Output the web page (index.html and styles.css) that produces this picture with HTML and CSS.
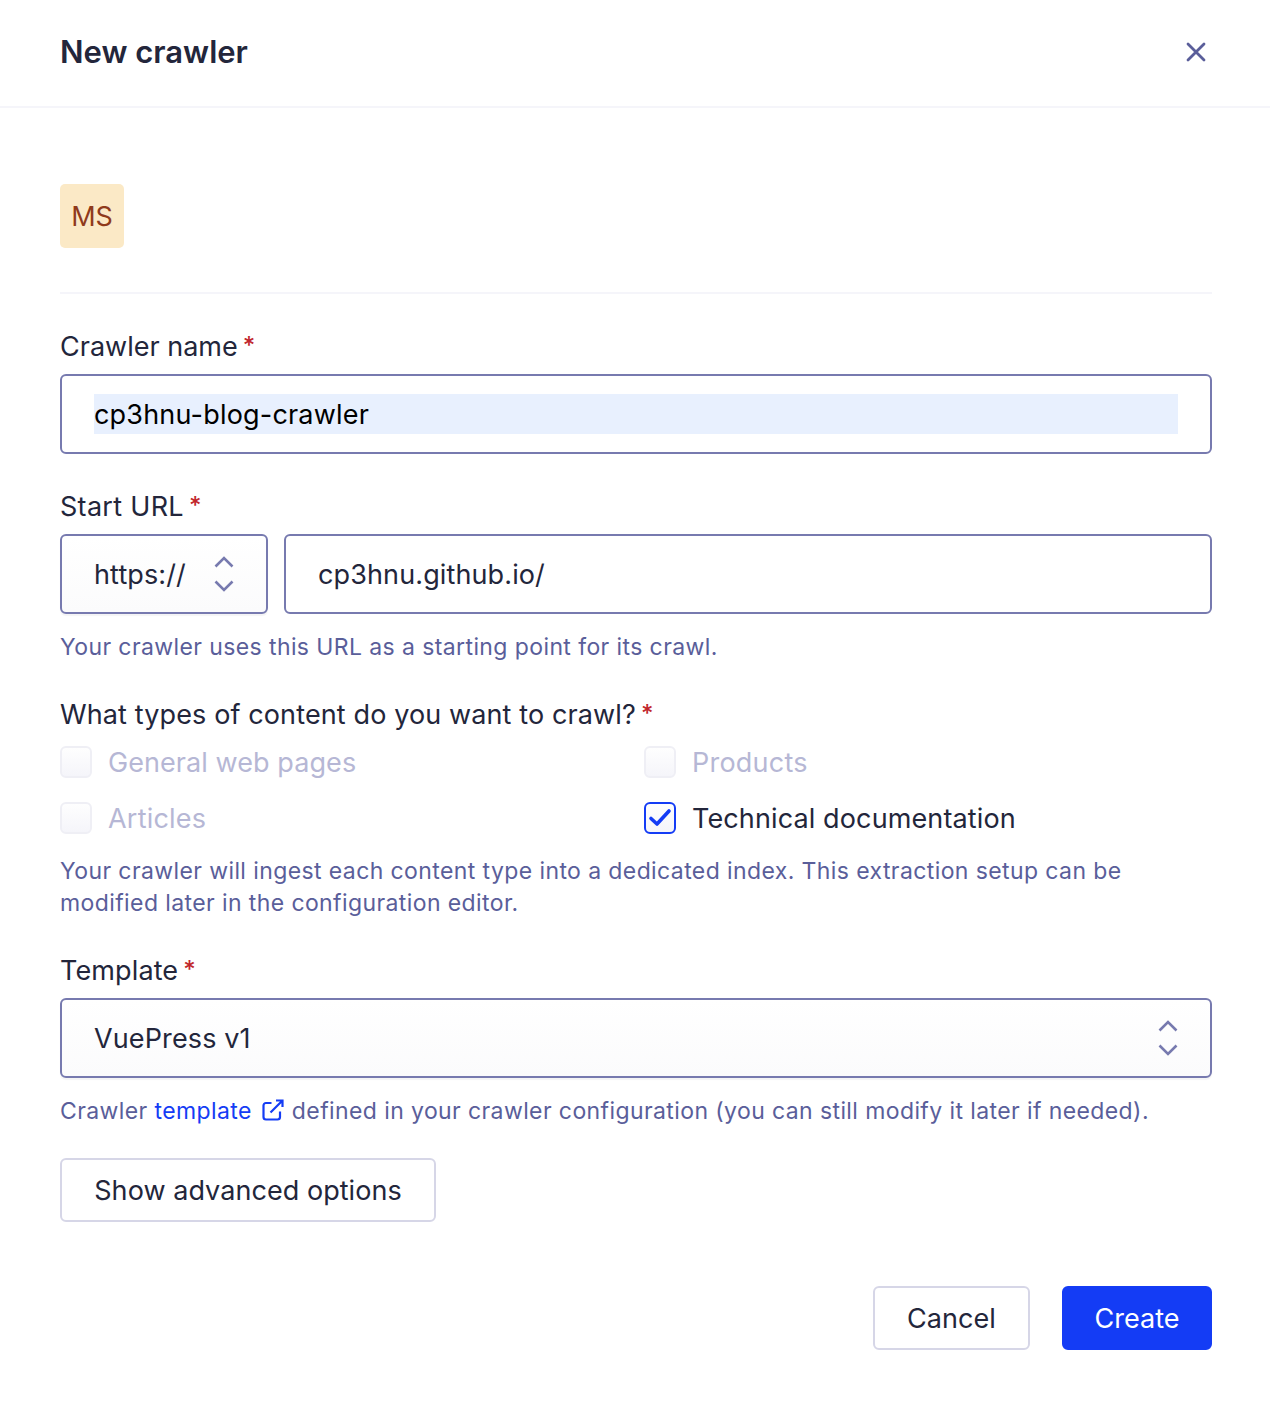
FILE: index.html
```html
<!DOCTYPE html>
<html lang="en">
<head>
<meta charset="utf-8">
<title>New crawler</title>
<link rel="stylesheet" href="styles.css">
</head>
<body>
<header class="header">
  <h1 class="title">New crawler</h1>
  <svg class="close" viewBox="0 0 24 24"><path d="M4 4l16 16M20 4l-16 16"/></svg>
</header>
<main class="body">
  <div class="identity"><div class="avatar">MS</div></div>
  <section class="field name-field">
    <div class="label l-name">Crawler name<span class="req">*</span></div>
    <div class="input"><div class="autofill">cp3hnu-blog-crawler</div></div>
  </section>
  <section class="field url-field">
    <div class="label l-url">Start URL<span class="req">*</span></div>
    <div class="url-row">
      <div class="select"><span class="value">https://</span><svg class="chev" viewBox="0 0 20 36"><path d="M1.500 10.500L10 2l8.500 8.500M1.500 25.500L10 34l8.500-8.500"/></svg></div>
      <div class="input">cp3hnu.github.io/</div>
    </div>
    <p class="help">Your crawler uses this URL as a starting point for its crawl.</p>
  </section>
  <section class="field types-field">
    <div class="label">What types of content do you want to crawl?<span class="req">*</span></div>
    <div class="types">
      <div class="option off"><span class="box"></span><span class="value o-general">General web pages</span></div>
      <div class="option off"><span class="box"></span><span class="value o-short">Products</span></div>
      <div class="option off"><span class="box"></span><span class="value o-short">Articles</span></div>
      <div class="option"><span class="box on"><svg viewBox="0 0 24 20"><path d="M3 10.500l6 5.500L21 3"/></svg></span><span class="value">Technical documentation</span></div>
    </div>
    <p class="help">Your crawler will ingest each content type into a dedicated index. This extraction setup can be<br>modified later in the configuration editor.</p>
  </section>
  <section class="field template-field">
    <div class="label">Template<span class="req">*</span></div>
    <div class="select"><span class="value">VuePress v1</span><svg class="chev" viewBox="0 0 20 36"><path d="M1.500 10.500L10 2l8.500 8.500M1.500 25.500L10 34l8.500-8.500"/></svg></div>
    <p class="help">Crawler <a class="link">template<svg class="ext" viewBox="0 0 22 22"><path d="M9.500 4H4a2.500 2.500 0 0 0-2.500 2.500V18A2.500 2.500 0 0 0 4 20.500h11.500A2.500 2.500 0 0 0 18 18v-5.500M14 1.500h6.500V8M20.500 1.500L8.500 13.500"/></svg></a>defined in your crawler configuration (you can still modify it later if needed).</p>
  </section>
  <div class="button advanced">Show advanced options</div>
  <footer class="actions"><div class="button cancel">Cancel</div><div class="button create">Create</div></footer>
</main>
</body>
</html>
```
FILE: styles.css
```css
* { box-sizing: border-box; }
body { margin: 0; background: #fff; color: #23263b; font: 27px/42px Inter, sans-serif; letter-spacing: .12px; height: 1406px; overflow: hidden; }
svg { fill: none; stroke: currentColor; display: block; flex: none; }
p, h1 { margin: 0; }
.header { height: 108px; padding: 0 62px 2px 60px; border-bottom: 2px solid #f5f5fa; display: flex; align-items: center; justify-content: space-between; }
.title { font-size: 31px; line-height: 40px; font-weight: 600; letter-spacing: 0; }
.close { width: 24px; height: 24px; color: #5a5e9a; stroke-width: 2.8; stroke-linecap: round; }
.body { padding: 76px 58px 0 60px; }
.identity { height: 110px; border-bottom: 2px solid #f5f5fa; }
.avatar { width: 64px; height: 64px; border-radius: 5px; background: #fbe9c6; color: #8f3a1b; display: flex; align-items: center; justify-content: center; letter-spacing: 0; padding-top: 1px; }
.label { height: 40px; margin-bottom: 8px; white-space: nowrap; }
.l-name { letter-spacing: 0; }
.l-url { letter-spacing: .3px; }
.req { color: #c1272d; margin-left: 5px; font-size: 24px; font-weight: 500; letter-spacing: 0; line-height: 1; vertical-align: 2px; }
.field { padding-top: 32px; }
.name-field { height: 160px; }
.url-field { height: 208px; }
.types-field { height: 256px; }
.template-field { height: 240px; }
.input, .select { height: 80px; border: 2px solid #777aaf; border-radius: 6px; background: #fff; padding: 18px 32px; }
.autofill { background: #e8f0fe; color: #000; height: 40px; letter-spacing: .19px; }
.select { display: flex; justify-content: space-between; align-items: center; background: linear-gradient(#fff, #fbfbfc); box-shadow: 0 2px 1px #23263b0d; }
.value { padding-top: 2px; }
.chev { width: 20px; height: 36px; color: #777aaf; stroke-width: 2.6; }
.url-row { display: grid; grid-template-columns: 208px 1fr; gap: 16px; }
.help { font-size: 23px; line-height: 32px; color: #5a5e9a; margin-top: 17px; white-space: nowrap; letter-spacing: .4px; }
.types { display: grid; grid-template-columns: 584px 1fr; row-gap: 16px; }
.option { display: flex; align-items: center; height: 40px; gap: 16px; white-space: nowrap; }
.off { color: #b6b7d5; }
.o-general { letter-spacing: .07px; }
.o-short { letter-spacing: .22px; }
.box { width: 32px; height: 32px; border: 2px solid #efeff5; border-radius: 6px; background: linear-gradient(#fefefe, #f5f5fa); display: flex; align-items: center; justify-content: center; }
.box.on { border-color: #143cf5; color: #143cf5; }
.box svg { width: 24px; height: 20px; stroke-width: 3.6; stroke-linecap: round; stroke-linejoin: round; }
.link { color: #143cf5; }
.ext { width: 22px; height: 22px; stroke-width: 2.2; display: inline-block; margin: 0 8px 0 10px; vertical-align: -2px; }
.button { height: 64px; padding-top: 2px; border: 2px solid #d6d6e7; border-radius: 6px; background: #fff; display: flex; align-items: center; justify-content: center; white-space: nowrap; letter-spacing: .05px; }
.advanced { width: 376px; }
.actions { margin-top: 64px; display: flex; justify-content: flex-end; gap: 32px; }
.cancel { width: 157px; }
.create { width: 150px; background: #143cf5; border-color: #143cf5; color: #fff; }
```
